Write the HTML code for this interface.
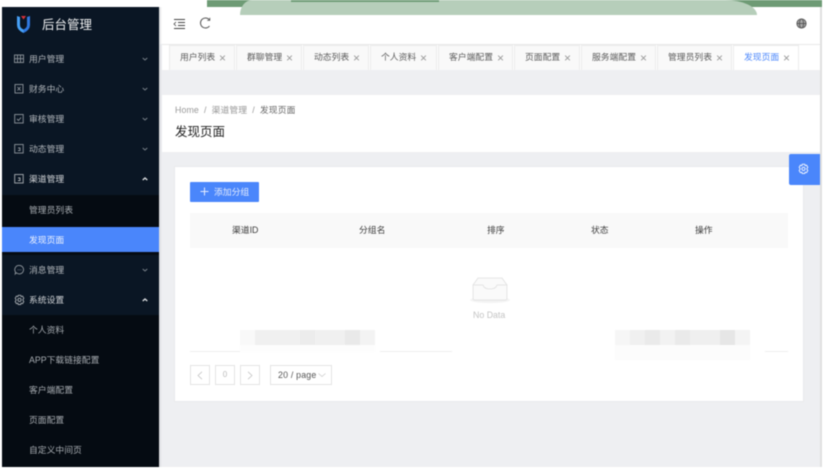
<!DOCTYPE html>
<html lang="zh">
<head>
<meta charset="utf-8">
<style>
html,body{margin:0;padding:0;width:835px;height:470px;overflow:hidden;background:#fff}
body{font-family:"Liberation Sans","Noto Sans CJK SC",sans-serif;position:relative}
#r{position:absolute;left:0;top:0;width:835px;height:470px;overflow:hidden;filter:blur(.5px)}
#r div,#r svg{position:absolute}
.t{white-space:nowrap;line-height:12px;font-size:8.8px}
.m{color:#b0b5ba;left:29px}
.s{color:#a6abb0;left:29px}
.tab{top:45px;height:25px;background:#f9f9f9;border:1px solid #ececec;border-bottom:0;box-sizing:border-box}
.tt{top:51px;color:#5c5c5c}
.x{top:52px;color:#999;font-size:12px;line-height:12px}
.th{top:224px;color:#3c3c3c}
.pg{top:365px;height:20px;width:20px;border:1px solid #e4e4e4;box-sizing:border-box;background:#fff;color:#bbb;font-size:8px;text-align:center;line-height:18px}
</style>
</head>
<body>
<div id="r">
  <!-- top banner -->
  <div style="left:207px;top:0;width:615px;height:7px;background:#6e9b75"></div>
  <div style="left:159px;top:7px;width:663px;height:37px;background:#fff"></div>
  <div style="left:240px;top:0;width:517px;height:15px;background:#b6ceba;border-radius:12px 32px 0 0/15px 15px 0 0"></div>
  <div style="left:291px;top:0;width:148px;height:2px;background:#6e9b75"></div>

  <!-- main bg -->
  <div style="left:159px;top:44px;width:661px;height:423px;background:#eeeff2"></div>
  <div style="left:820px;top:7px;width:2px;height:460px;background:#e0e0e0"></div>
  <div style="left:159px;top:7px;width:3px;height:460px;background:linear-gradient(90deg,#d8dadd,rgba(216,218,221,0))"></div>

  <!-- sidebar -->
  <div style="left:2px;top:7px;width:157px;height:460px;background:#0a1624"></div>
  <div style="left:2px;top:195px;width:157px;height:60px;background:#050b12"></div>
  <div style="left:2px;top:315px;width:157px;height:152px;background:#050b12"></div>
  <div style="left:2px;top:227px;width:157px;height:25px;background:#4a86fb"></div>

  <svg style="left:15px;top:14px" width="18" height="20" viewBox="0 0 18 20">
    <path d="M2 2 L5 3 L5 11 Q5 14 8.5 15.5 L8.5 19 Q2 16 2 11Z" fill="#46a0f5"/>
    <path d="M15 2 L12 3 L12 11 Q12 14 8.5 15.5 L8.5 19 Q15 16 15 11Z" fill="#2f78e0"/>
    <path d="M6 2 H11 L8.5 5.5Z" fill="#d8323c"/>
  </svg>
  <div class="t" style="left:42px;top:19px;font-size:12.5px;color:#f0f1f2">后台管理</div>

  <div class="t m" style="top:53px">用户管理</div>
  <div class="t m" style="top:83px">财务中心</div>
  <div class="t m" style="top:113px">审核管理</div>
  <div class="t m" style="top:143px">动态管理</div>
  <div class="t m" style="top:173px;color:#d0d3d6">渠道管理</div>
  <div class="t s" style="top:204px">管理员列表</div>
  <div class="t" style="left:29px;top:234px;color:#eef3fe">发现页面</div>
  <div class="t m" style="top:264px">消息管理</div>
  <div class="t m" style="top:294px;color:#d0d3d6">系统设置</div>
  <div class="t s" style="top:324px">个人资料</div>
  <div class="t s" style="top:354px">APP下载链接配置</div>
  <div class="t s" style="top:384px">客户端配置</div>
  <div class="t s" style="top:414px">页面配置</div>
  <div class="t s" style="top:444px">自定义中间页</div>

  <!-- sidebar icons -->
  <svg style="left:14px;top:53px" width="10" height="12" viewBox="0 0 10 12" fill="none" stroke="#8e959c" stroke-width=".9"><rect x=".5" y="2" width="9" height="7.5"/><path d="M3.5 2V9.5M6.5 2V9.5M.5 5.7H9.5"/></svg>
  <svg style="left:14px;top:83px" width="10" height="12" viewBox="0 0 10 12" fill="none" stroke="#8e959c" stroke-width=".9"><rect x="1" y="1.5" width="8" height="8.5"/><path d="M3.5 4L6.5 7.5M6.5 4L3.5 7.5"/></svg>
  <svg style="left:14px;top:113px" width="10" height="12" viewBox="0 0 10 12" fill="none" stroke="#8e959c" stroke-width=".9"><rect x=".7" y="1.5" width="8.5" height="8.5"/><path d="M3 6L4.5 7.5L7 4.5"/></svg>
  <svg style="left:14px;top:143px" width="10" height="12" viewBox="0 0 10 12" fill="none" stroke="#8e959c" stroke-width=".9"><rect x=".7" y="1.5" width="8.5" height="8.5"/><path d="M4 5H6V7.5H4"/></svg>
  <svg style="left:14px;top:173px" width="10" height="12" viewBox="0 0 10 12" fill="none" stroke="#a9aeb3" stroke-width=".9"><rect x=".7" y="1.5" width="8.5" height="8.5"/><path d="M4 5H6V7.5H4"/></svg>
  <svg style="left:14px;top:264px" width="11" height="12" viewBox="0 0 11 12" fill="none" stroke="#8e959c" stroke-width=".9"><path d="M5.5 1.5A4.2 4.2 0 1 1 2.5 8.8L1.2 10L1.5 8A4.2 4.2 0 0 1 5.5 1.5Z"/><path d="M3.7 5.8H4.3M5.2 5.8H5.8M6.7 5.8H7.3"/></svg>
  <svg style="left:14px;top:294px" width="11" height="12" viewBox="0 0 11 12" fill="none" stroke="#a9aeb3" stroke-width=".9"><path d="M4.3 1.3H6.7L7.2 2.6L8.6 2.2L9.8 4.2L8.8 5.9L9.8 7.6L8.6 9.6L7.2 9.2L6.7 10.5H4.3L3.8 9.2L2.4 9.6L1.2 7.6L2.2 5.9L1.2 4.2L2.4 2.2L3.8 2.6Z"/><circle cx="5.5" cy="5.9" r="1.6"/></svg>

  <!-- chevrons -->
  <svg style="left:140px;top:53px" width="10" height="12" viewBox="0 0 10 12" fill="none" stroke="#79818a" stroke-width="1"><path d="M2.7 5L5 7L7.3 5"/></svg>
  <svg style="left:140px;top:83px" width="10" height="12" viewBox="0 0 10 12" fill="none" stroke="#79818a" stroke-width="1"><path d="M2.7 5L5 7L7.3 5"/></svg>
  <svg style="left:140px;top:113px" width="10" height="12" viewBox="0 0 10 12" fill="none" stroke="#79818a" stroke-width="1"><path d="M2.7 5L5 7L7.3 5"/></svg>
  <svg style="left:140px;top:143px" width="10" height="12" viewBox="0 0 10 12" fill="none" stroke="#79818a" stroke-width="1"><path d="M2.7 5L5 7L7.3 5"/></svg>
  <svg style="left:140px;top:173px" width="10" height="12" viewBox="0 0 10 12" fill="none" stroke="#e0e2e4" stroke-width="1.3"><path d="M2.7 7L5 5L7.3 7"/></svg>
  <svg style="left:140px;top:264px" width="10" height="12" viewBox="0 0 10 12" fill="none" stroke="#79818a" stroke-width="1"><path d="M2.7 5L5 7L7.3 5"/></svg>
  <svg style="left:140px;top:294px" width="10" height="12" viewBox="0 0 10 12" fill="none" stroke="#e0e2e4" stroke-width="1.3"><path d="M2.7 7L5 5L7.3 7"/></svg>

  <!-- header icons -->
  <svg style="left:172px;top:17px" width="14" height="14" viewBox="0 0 14 14" fill="none" stroke="#444" stroke-width="1"><path d="M2 2.5H13M6 5.5H13M6 8.5H13M2 11.5H13"/><path d="M4 5L2 7L4 9" stroke-width=".8"/></svg>
  <svg style="left:198px;top:16px" width="14" height="14" viewBox="0 0 14 14" fill="none" stroke="#555" stroke-width="1"><path d="M11.5 4A5 5 0 1 0 11.5 10"/><path d="M11.8 1.8V4.4H9.2" stroke-width=".8"/></svg>
  <svg style="left:796px;top:18px" width="11" height="11" viewBox="0 0 11 11" fill="none" stroke="#555" stroke-width=".9"><circle cx="5.5" cy="5.5" r="4.6" fill="#aaa"/><ellipse cx="5.5" cy="5.5" rx="2" ry="4.6"/><path d="M1 5.5H10"/></svg>

  <!-- tabs bar -->
  <div style="left:162px;top:44px;width:658px;height:26px;background:#fff;border-top:1px solid #e8e8e8;box-sizing:border-box"></div>
  <div class="tab" style="left:169px;width:66px"></div><div class="t tt" style="left:180px">用户列表</div><div class="x" style="left:219px">×</div>
  <div class="tab" style="left:236px;width:66px"></div><div class="t tt" style="left:247px">群聊管理</div><div class="x" style="left:286px">×</div>
  <div class="tab" style="left:303px;width:66px"></div><div class="t tt" style="left:314px">动态列表</div><div class="x" style="left:353px">×</div>
  <div class="tab" style="left:370px;width:67px"></div><div class="t tt" style="left:381px">个人资料</div><div class="x" style="left:420px">×</div>
  <div class="tab" style="left:438px;width:75px"></div><div class="t tt" style="left:449px">客户端配置</div><div class="x" style="left:497px">×</div>
  <div class="tab" style="left:514px;width:66px"></div><div class="t tt" style="left:525px">页面配置</div><div class="x" style="left:564px">×</div>
  <div class="tab" style="left:581px;width:75px"></div><div class="t tt" style="left:592px">服务端配置</div><div class="x" style="left:640px">×</div>
  <div class="tab" style="left:657px;width:75px"></div><div class="t tt" style="left:668px">管理员列表</div><div class="x" style="left:716px">×</div>
  <div class="tab" style="left:733px;width:66px;background:#fff"></div><div class="t tt" style="left:744px;color:#4a86fb">发现页面</div><div class="x" style="left:783px">×</div>

  <!-- page header -->
  <div style="left:162px;top:95px;width:658px;height:57px;background:#fff"></div>
  <div class="t" style="left:175px;top:104px;color:#999;letter-spacing:.1px">Home&nbsp;&nbsp;/&nbsp;&nbsp;渠道管理&nbsp;&nbsp;/&nbsp;&nbsp;<span style="color:#666">发现页面</span></div>
  <div class="t" style="left:175px;top:125px;font-size:12.5px;color:#222;line-height:14px">发现页面</div>

  <!-- card -->
  <div style="left:175px;top:167px;width:628px;height:234px;background:#fff;outline:1px solid #e9eaec"></div>
  <div style="left:190px;top:182px;width:69px;height:20px;background:#4a86fb;border-radius:1px"></div>
  <svg style="left:200px;top:187px" width="9" height="9" viewBox="0 0 9 9" stroke="#e4ecfe" stroke-width="1"><path d="M4.5 .5V8.5M.5 4.5H8.5"/></svg>
  <div class="t" style="left:214px;top:186px;color:#e4ecfe">添加分组</div>

  <div style="left:190px;top:213px;width:598px;height:35px;background:#f9f9f9"></div>
  <div class="t th" style="left:232px">渠道ID</div>
  <div class="t th" style="left:359px">分组名</div>
  <div class="t th" style="left:487px">排序</div>
  <div class="t th" style="left:591px">状态</div>
  <div class="t th" style="left:695px">操作</div>

  <!-- empty -->
  <div style="left:470px;top:297px;width:40px;height:6px;border-radius:50%;background:#f3f3f3"></div>
  <svg style="left:472px;top:276px" width="36" height="28" viewBox="0 0 36 28" fill="#fafafa" stroke="#e0e0e0" stroke-width=".8"><path d="M1 9L6 2H30L35 9V22Q35 24 33 24H3Q1 24 1 22Z"/><path d="M1 9H11Q12 13 18 13Q24 13 25 9H35" fill="none"/></svg>
  <div class="t" style="left:473px;top:309px;color:#c4c4c4">No Data</div>

  <!-- mosaic blocks -->
  <div style="left:240px;top:330px;width:15px;height:15px;background:#f9f9f9"></div>
  <div style="left:255px;top:330px;width:45px;height:15px;background:#f0f0f0"></div>
  <div style="left:300px;top:330px;width:30px;height:15px;background:#ececec"></div>
  <div style="left:315px;top:330px;width:30px;height:15px;background:#f0f0f0"></div>
  <div style="left:345px;top:330px;width:15px;height:15px;background:#e9e9e9"></div>
  <div style="left:360px;top:330px;width:15px;height:15px;background:#f3f3f3"></div>
  <div style="left:240px;top:345px;width:135px;height:7px;background:#fdfdfd"></div>

  <div style="left:615px;top:330px;width:15px;height:15px;background:#f6f6f6"></div>
  <div style="left:630px;top:330px;width:15px;height:15px;background:#f0f0f0"></div>
  <div style="left:645px;top:330px;width:15px;height:15px;background:#eaeaea"></div>
  <div style="left:660px;top:330px;width:15px;height:15px;background:#f2f2f2"></div>
  <div style="left:675px;top:330px;width:15px;height:15px;background:#eaeaea"></div>
  <div style="left:690px;top:330px;width:30px;height:15px;background:#efefef"></div>
  <div style="left:720px;top:330px;width:15px;height:15px;background:#e6e6e6"></div>
  <div style="left:735px;top:330px;width:15px;height:15px;background:#f4f4f4"></div>
  <div style="left:615px;top:345px;width:135px;height:15px;background:#fcfcfc"></div>

  <div style="left:190px;top:351px;width:50px;height:1px;background:#eeeeee"></div>
  <div style="left:380px;top:351px;width:72px;height:1px;background:#eeeeee"></div>
  <div style="left:765px;top:351px;width:23px;height:1px;background:#eeeeee"></div>

  <!-- pagination -->
  <div class="pg" style="left:190px"></div>
  <svg style="left:196px;top:371px" width="8" height="9" viewBox="0 0 8 9" fill="none" stroke="#c4c4c4" stroke-width=".8"><path d="M6 .8L2 4.5L6 8.2"/></svg>
  <div class="pg" style="left:215px">0</div>
  <div class="pg" style="left:240px"></div>
  <svg style="left:246px;top:371px" width="8" height="9" viewBox="0 0 8 9" fill="none" stroke="#c4c4c4" stroke-width=".8"><path d="M2 .8L6 4.5L2 8.2"/></svg>
  <div style="left:270px;top:365px;width:62px;height:20px;border:1px solid #e4e4e4;box-sizing:border-box"></div>
  <div class="t" style="left:278px;top:369px;color:#555;letter-spacing:.2px">20 / page</div>
  <svg style="left:317px;top:370px" width="10" height="10" viewBox="0 0 10 10" fill="none" stroke="#ccc" stroke-width=".8"><path d="M1.5 3.5L5 6.5L8.5 3.5"/></svg>

  <!-- floating settings -->
  <div style="left:789px;top:154px;width:31px;height:31px;background:#4a86fb;border-radius:2px 0 0 2px"></div>
  <svg style="left:798px;top:163px" width="11" height="12" viewBox="0 0 11 12" fill="none" stroke="#eaf0fe" stroke-width="1"><path d="M4.3 1.3H6.7L7.2 2.6L8.6 2.2L9.8 4.2L8.8 5.9L9.8 7.6L8.6 9.6L7.2 9.2L6.7 10.5H4.3L3.8 9.2L2.4 9.6L1.2 7.6L2.2 5.9L1.2 4.2L2.4 2.2L3.8 2.6Z"/><circle cx="5.5" cy="5.9" r="1.6"/></svg>
</div>
</body>
</html>
